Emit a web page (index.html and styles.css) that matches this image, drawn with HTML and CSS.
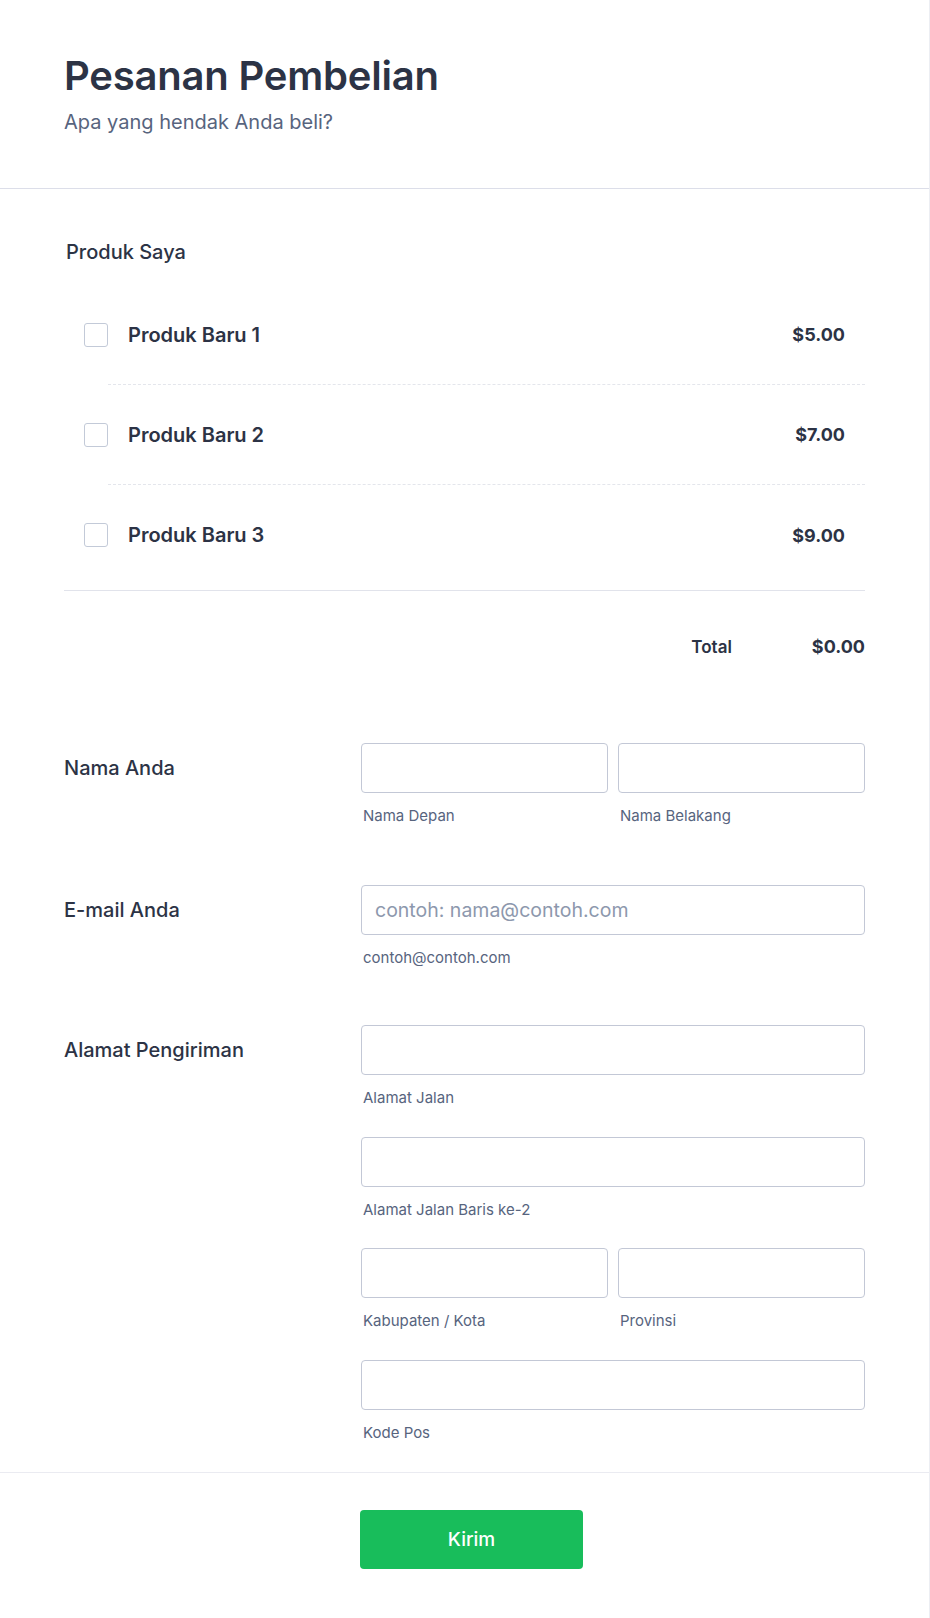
FILE: index.html
```html
<!DOCTYPE html>
<html lang="id">
<head>
<meta charset="utf-8">
<title>Pesanan Pembelian</title>
<link rel="stylesheet" href="styles.css">
</head>
<body>
<form class="form-card">
  <header class="form-header">
    <h1 class="form-title">Pesanan Pembelian</h1>
    <p class="form-subtitle">Apa yang hendak Anda beli?</p>
  </header>

  <section class="products">
    <div class="products-label">Produk Saya</div>
    <div class="product-list">
      <label class="product-item">
        <input type="checkbox" class="product-check">
        <span class="product-body">
          <span class="product-name">Produk Baru 1</span>
          <span class="product-price">$5.00</span>
        </span>
      </label>
      <label class="product-item">
        <input type="checkbox" class="product-check">
        <span class="product-body">
          <span class="product-name">Produk Baru 2</span>
          <span class="product-price">$7.00</span>
        </span>
      </label>
      <label class="product-item last">
        <input type="checkbox" class="product-check">
        <span class="product-body">
          <span class="product-name">Produk Baru 3</span>
          <span class="product-price">$9.00</span>
        </span>
      </label>
    </div>
    <div class="total-row">
      <span class="total-label">Total</span>
      <span class="total-value">$0.00</span>
    </div>
  </section>

  <div class="field first-field">
    <div class="field-label">Nama Anda</div>
    <div class="field-inputs">
      <div class="sub-row">
        <div class="sub-field">
          <input type="text" class="text-input">
          <div class="sub-label">Nama Depan</div>
        </div>
        <div class="sub-field">
          <input type="text" class="text-input">
          <div class="sub-label">Nama Belakang</div>
        </div>
      </div>
    </div>
  </div>

  <div class="field">
    <div class="field-label">E-mail Anda</div>
    <div class="field-inputs">
      <div class="sub-field">
        <input type="email" class="text-input" placeholder="contoh: nama@contoh.com">
        <div class="sub-label">contoh@contoh.com</div>
      </div>
    </div>
  </div>

  <div class="field address-field">
    <div class="field-label">Alamat Pengiriman</div>
    <div class="field-inputs stacked">
      <div class="sub-field">
        <input type="text" class="text-input">
        <div class="sub-label">Alamat Jalan</div>
      </div>
      <div class="sub-field">
        <input type="text" class="text-input">
        <div class="sub-label">Alamat Jalan Baris ke-2</div>
      </div>
      <div class="sub-row">
        <div class="sub-field">
          <input type="text" class="text-input">
          <div class="sub-label">Kabupaten / Kota</div>
        </div>
        <div class="sub-field">
          <input type="text" class="text-input">
          <div class="sub-label">Provinsi</div>
        </div>
      </div>
      <div class="sub-field">
        <input type="text" class="text-input">
        <div class="sub-label">Kode Pos</div>
      </div>
    </div>
  </div>

  <div class="submit-area">
    <button type="button" class="submit-btn">Kirim</button>
  </div>
</form>
</body>
</html>
```

FILE: styles.css
```css
* { box-sizing: border-box; }

html, body {
  margin: 0;
  padding: 0;
  background: #ffffff;
}

body {
  font-family: Inter, "Noto Sans", "Liberation Sans", sans-serif;
  color: #2c3345;
}

.form-card {
  width: 930px;
  min-height: 1618px;
  border-right: 1px solid #eceef3;
  border-bottom: 1px solid #eceef3;
  background: #ffffff;
}

.form-header {
  padding: 52px 64px 54px;
  border-bottom: 1px solid #dcdee9;
}

.form-title {
  margin: 0;
  font-size: 40px;
  line-height: 48px;
  font-weight: 600;
  letter-spacing: -0.2px;
  color: #2c3345;
}

.form-subtitle {
  margin: 10px 0 0;
  font-size: 20px;
  line-height: 24px;
  color: #57647e;
}

.products {
  margin: 0 64px;
  padding-top: 51px;
}

.products-label {
  padding-left: 2px;
  font-size: 20px;
  line-height: 24px;
  font-weight: 500;
  color: #2c3345;
}

.product-list {
  margin-top: 21px;
  padding-bottom: 5px;
  border-bottom: 1px solid #e1e3eb;
}

.product-item {
  display: flex;
  align-items: center;
  height: 100px;
  cursor: pointer;
}

.product-check {
  appearance: none;
  -webkit-appearance: none;
  margin: 0 0 0 20px;
  width: 24px;
  height: 24px;
  flex: none;
  border: 1px solid #c3cad8;
  border-radius: 3px;
  background: #ffffff;
}

.product-body {
  flex: 1;
  height: 100%;
  display: flex;
  align-items: center;
  justify-content: space-between;
  padding: 0 20px;
  border-bottom: 1px dashed #e4e6ec;
}

.product-item.last .product-body {
  border-bottom: none;
}

.product-name {
  font-size: 20px;
  font-weight: 600;
  color: #2c3345;
}

.product-price {
  font-size: 18px;
  font-weight: 700;
  color: #2c3345;
}

.total-row {
  display: flex;
  justify-content: flex-end;
  align-items: center;
  gap: 80px;
  padding-top: 44px;
  line-height: 24px;
}

.total-label {
  font-size: 17px;
  font-weight: 600;
}

.total-value {
  font-size: 18px;
  font-weight: 700;
}

.field {
  display: grid;
  grid-template-columns: 297px 1fr;
  padding: 30px 64px 29px;
}

.first-field {
  margin-top: 54px;
}

.address-field {
  margin-top: -2px;
}

.field-label {
  padding-top: 13px;
  font-size: 20px;
  line-height: 24px;
  font-weight: 500;
  color: #2c3345;
}

.field-inputs.stacked {
  display: flex;
  flex-direction: column;
  gap: 28.5px;
}

.sub-row {
  display: flex;
  gap: 10px;
}

.sub-row .sub-field {
  flex: 1;
}

.text-input {
  display: block;
  width: 100%;
  height: 50px;
  margin: 0;
  padding: 0 13px;
  border: 1px solid #c3c8d6;
  border-radius: 4px;
  background: #ffffff;
  font-family: Inter, "Noto Sans", sans-serif;
  font-size: 19.5px;
  color: #2c3345;
  outline: none;
}

.text-input::placeholder {
  color: #8d98ad;
  font-weight: 400;
}

.sub-label {
  margin-top: 13px;
  padding-left: 2px;
  font-size: 15px;
  line-height: 20px;
  color: #57647e;
}

.submit-area {
  border-top: 1px solid #eaebf1;
  padding: 37px 0 49px 360px;
}

.submit-btn {
  display: block;
  width: 223px;
  height: 59px;
  border: none;
  border-radius: 4px;
  background: #18bd5b;
  color: #ffffff;
  font-family: Inter, "Noto Sans", sans-serif;
  font-size: 19px;
  font-weight: 500;
  cursor: pointer;
}
```
